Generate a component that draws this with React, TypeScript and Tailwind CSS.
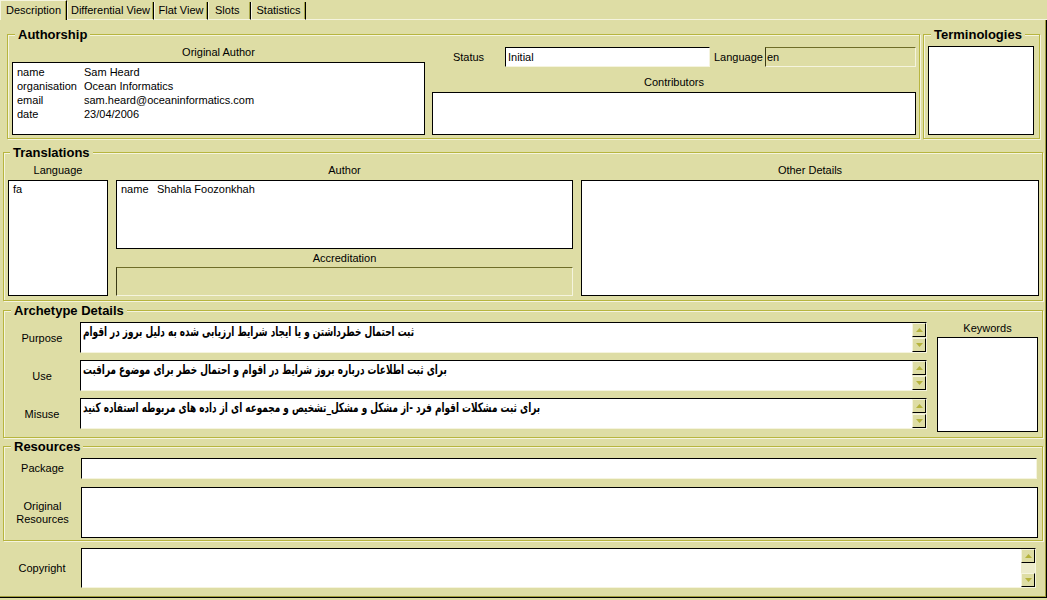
import React from "react";

function Group({
  title,
  className = "",
  legendClass = "",
  children,
}: {
  title: string;
  className?: string;
  legendClass?: string;
  children: React.ReactNode;
}) {
  return (
    <fieldset
      className={`min-w-0 border border-[#b7b53f] shadow-[inset_1px_1px_0_#f5f4de,1px_1px_0_#f5f4de] ${className}`}
    >
      <legend
        className={`bg-[#dedda5] px-[3px] text-[13px] font-bold leading-[15px] ${legendClass}`}
      >
        {title}
      </legend>
      {children}
    </fieldset>
  );
}

const listBox = "bg-white border border-black";
const editBox =
  "bg-white border border-t-black border-l-black border-r-[#f5f4de] border-b-[#f5f4de]";
const disabledBox =
  "bg-[#dedda5] border border-t-[#6f6d28] border-l-[#3a3914] border-r-[#f5f4de] border-b-[#f5f4de]";

function ScrollBtn({ up }: { up?: boolean }) {
  return (
    <div className="flex h-[14px] w-[14px] items-center justify-center border border-t-[#f5f4de] border-l-[#f5f4de] border-r-black border-b-black bg-[#dedda5]">
      <svg width="7" height="4" viewBox="0 0 7 4">
        <path d={up ? "M3.5 0 L7 4 L0 4 Z" : "M0 0 L7 0 L3.5 4 Z"} fill="#b5b33c" />
      </svg>
    </div>
  );
}

function ScrollBar() {
  return (
    <div className="flex w-[14px] flex-col justify-between bg-[#ecebcb]">
      <ScrollBtn up />
      <ScrollBtn />
    </div>
  );
}

function RtlArea({ text }: { text: string }) {
  return (
    <div className={`flex h-[31px] ${editBox}`}>
      <div className="flex-1 overflow-hidden pl-[2px] pt-[1px]">
        <div
          dir="rtl"
          className="w-fit origin-left scale-x-[0.76] whitespace-nowrap text-left font-['DejaVu_Sans_Condensed','DejaVu_Sans',sans-serif] text-[13px] font-bold leading-[16px]"
        >
          {text}
        </div>
      </div>
      <ScrollBar />
    </div>
  );
}

const tabs = [
  { label: "Differential View", w: "w-[87px]", cls: "justify-center" },
  { label: "Flat View", w: "w-[54px]", cls: "justify-center" },
  { label: "Slots", w: "w-[43px]", cls: "justify-start pl-[6px]" },
  { label: "Statistics", w: "w-[55px]", cls: "justify-center" },
];

export default function App() {
  return (
    <div className="h-[600px] w-[1047px] overflow-hidden bg-[#dedda5] font-['Liberation_Sans',Arial,sans-serif] text-[11px] leading-[13px] text-black">
      {/* Tabs */}
      <div className="flex h-[20px] items-end">
        <div className="flex h-[20px] w-[67px] items-center justify-center border-l border-t border-r border-l-[#f5f4de] border-t-[#f5f4de] border-r-black pb-[1px] shadow-[inset_-1px_0_0_#a9a748]">
          Description
        </div>
        {tabs.map((t) => (
          <div
            key={t.label}
            className={`flex h-[18px] ${t.w} ${t.cls} items-center border-b border-l border-r border-b-[#f5f4de] border-l-[#f5f4de] border-r-black shadow-[inset_-1px_0_0_#a9a748]`}
          >
            {t.label}
          </div>
        ))}
        <div className="h-[18px] flex-1 border-b border-b-[#f5f4de]" />
      </div>

      {/* Panel */}
      <div className="flex h-[578px] flex-col pl-[3px] pr-[4px] shadow-[inset_-1px_-1px_0_#000,inset_-2px_-2px_0_#a09e3e]">
        {/* Row 1 */}
        <div className="ml-[4px] mt-[7px] flex h-[112px] gap-[3px]">
          <Group title="Authorship" className="h-[112px] w-[913px]" legendClass="ml-[7px]">
            <div className="flex pl-[4px] pr-[3px]">
              <div className="flex w-[413px] flex-col">
                <div className="flex h-[20px] items-center justify-center pt-[1px]">Original Author</div>
                <div className={`h-[73px] pl-[4px] pt-[2px] leading-[14px] ${listBox}`}>
                  {[
                    ["name", "Sam Heard"],
                    ["organisation", "Ocean Informatics"],
                    ["email", "sam.heard@oceaninformatics.com"],
                    ["date", "23/04/2006"],
                  ].map(([k, v]) => (
                    <div key={k} className="flex">
                      <span className="w-[67px]">{k}</span>
                      <span>{v}</span>
                    </div>
                  ))}
                </div>
              </div>
              <div className="ml-[7px] flex flex-1 flex-col">
                <div className="mt-[5px] flex h-[20px] items-stretch">
                  <div className="flex w-[73px] items-center justify-center">Status</div>
                  <div className={`flex w-[205px] items-center pl-[2px] ${editBox}`}>Initial</div>
                  <div className="ml-[4px] flex items-center">Language</div>
                  <div className={`ml-[2px] flex flex-1 items-center pl-[1px] ${disabledBox}`}>en</div>
                </div>
                <div className="h-[25px] pt-[9px] text-center">Contributors</div>
                <div className={`h-[43px] ${listBox}`} />
              </div>
            </div>
          </Group>
          <Group title="Terminologies" className="h-[112px] w-[117px]" legendClass="ml-[7px]">
            <div className="pl-[4px] pt-[4px]">
              <div className={`h-[89px] w-[106px] ${listBox}`} />
            </div>
          </Group>
        </div>

        {/* Translations */}
        <Group title="Translations" className="mt-[6px] h-[156px]" legendClass="ml-[6px]">
          <div className="flex gap-[8px] pl-[4px] pr-[3px]">
            <div className="flex w-[100px] flex-col">
              <div className="flex h-[20px] items-center justify-center pt-[1px]">Language</div>
              <div className={`h-[116px] pl-[4px] pt-[2px] ${listBox}`}>fa</div>
            </div>
            <div className="flex w-[457px] flex-col">
              <div className="flex h-[20px] items-center justify-center pt-[1px]">Author</div>
              <div className={`flex h-[69px] pl-[4px] pt-[2px] ${listBox}`}>
                <span className="w-[36px]">name</span>
                <span>Shahla Foozonkhah</span>
              </div>
              <div className="flex h-[18px] items-center justify-center pt-[1px]">Accreditation</div>
              <div className={`h-[29px] ${disabledBox}`} />
            </div>
            <div className="flex flex-1 flex-col">
              <div className="flex h-[20px] items-center justify-center pt-[1px]">Other Details</div>
              <div className={`h-[116px] ${listBox}`} />
            </div>
          </div>
        </Group>

        {/* Archetype Details */}
        <Group title="Archetype Details" className="mt-[2px] h-[135px]" legendClass="ml-[7px]">
          <div className="flex pr-[4px]">
            <div className="mt-[4px] flex flex-1 flex-col gap-[7px]">
              {[
                ["Purpose", "ثبت احتمال خطرداشتن و یا ایجاد شرایط ارزیابی شده به دلیل بروز در اقوام"],
                ["Use", "برای ثبت اطلاعات درباره بروز شرایط در اقوام و احتمال خطر برای موضوع مراقبت"],
                [
                  "Misuse",
                  "برای ثبت مشکلات اقوام فرد -از مشکل و مشکل_تشخیص و مجموعه ای از داده های مربوطه استفاده کنید",
                ],
              ].map(([label, text]) => (
                <div key={label} className="flex h-[31px]">
                  <div className="flex w-[76px] items-center justify-center pt-[1px]">{label}</div>
                  <div className="flex-1">
                    <RtlArea text={text} />
                  </div>
                </div>
              ))}
            </div>
            <div className="ml-[10px] flex w-[101px] flex-col">
              <div className="flex h-[19px] items-center justify-center pt-[1px]">Keywords</div>
              <div className={`h-[95px] ${listBox}`} />
            </div>
          </div>
        </Group>

        {/* Resources */}
        <Group title="Resources" className="mt-[1px] h-[102px]" legendClass="ml-[7px]">
          <div className="flex flex-col pr-[4px] pt-[4px]">
            <div className="flex h-[21px]">
              <div className="flex w-[77px] items-center justify-center">Package</div>
              <div className={`mr-[1px] flex-1 ${editBox}`} />
            </div>
            <div className="mt-[8px] flex h-[51px]">
              <div className="flex w-[77px] items-center justify-center text-center">
                Original
                <br />
                Resources
              </div>
              <div className={`flex-1 ${listBox}`} />
            </div>
          </div>
        </Group>

        {/* Copyright */}
        <div className="mr-[7px] mt-[7px] flex h-[40px]">
          <div className="flex w-[78px] items-center justify-center">Copyright</div>
          <div className={`flex flex-1 ${editBox}`}>
            <div className="flex-1" />
            <ScrollBar />
          </div>
        </div>
      </div>
    </div>
  );
}
